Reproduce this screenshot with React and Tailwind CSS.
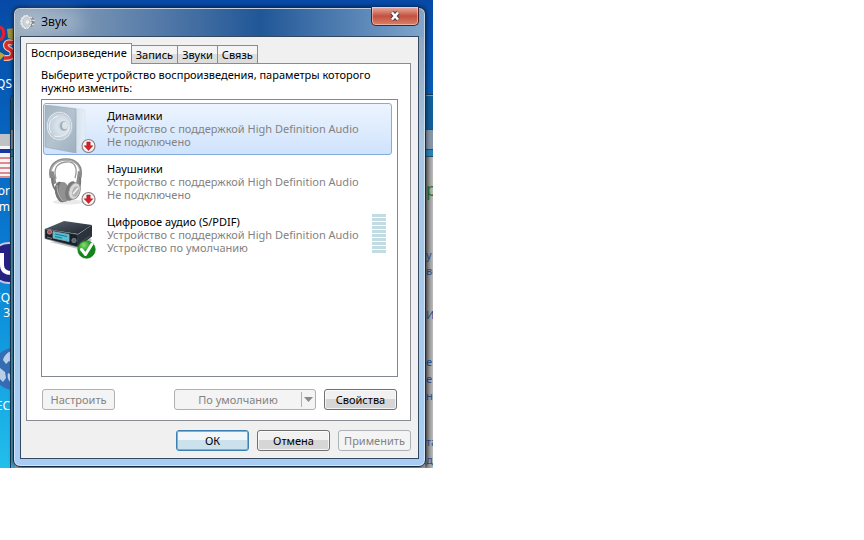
import React, { useState } from 'react';
import clsx from 'clsx';

const TABS = ['Воспроизведение', 'Запись', 'Звуки', 'Связь'];

const DEVICES = [
  { id: 'speakers', name: 'Динамики', status: 'Не подключено' },
  { id: 'headphones', name: 'Наушники', status: 'Не подключено' },
  { id: 'spdif', name: 'Цифровое аудио (S/PDIF)', status: 'Устройство по умолчанию', level: true },
];

const UnpluggedBadge = () => (
  <g>
    <circle cx="44.500" cy="41" r="6.500" fill="#f6f4f4" stroke="#8d8484" strokeWidth="1.200" />
    <path d="M42.800 37h3.400v3.800h2.600l-4.300 4.700-4.300-4.700h2.600z" fill="#d3222a" stroke="#a50f18" strokeWidth=".5" />
  </g>
);

const SpeakerIcon = () => (
  <svg className="h-12 w-14" viewBox="0 0 56 48" aria-hidden="true">
    <defs>
      <linearGradient id="spkFront" x1="0" y1="0" x2="1" y2="1">
        <stop offset="0" stopColor="#a3b2bf" />
        <stop offset=".5" stopColor="#b4c3cf" />
        <stop offset="1" stopColor="#9db0bf" />
      </linearGradient>
      <linearGradient id="spkSide" x1="0" x2="1">
        <stop offset="0" stopColor="#d5e1ed" />
        <stop offset="1" stopColor="#e6effa" />
      </linearGradient>
      <radialGradient id="spkCone" cx=".62" cy=".5">
        <stop offset="0" stopColor="#b5c3ce" />
        <stop offset=".45" stopColor="#dbe4eb" />
        <stop offset="1" stopColor="#c6d2dc" />
      </radialGradient>
    </defs>
    <path d="M1 0l7-.5L41 4l-9 0z" fill="#dde6ee" />
    <path d="M32 4l9 1v35l-9 8z" fill="url(#spkSide)" stroke="#d0dceb" strokeWidth=".5" />
    <path d="M1 0l31 4v44L1 42z" fill="url(#spkFront)" stroke="#93a5b4" strokeWidth=".6" />
    <ellipse cx="15.500" cy="21" rx="13" ry="14.500" fill="#eef3f8" stroke="#a2b2bf" strokeWidth=".6" />
    <ellipse cx="15.500" cy="21" rx="11.500" ry="13" fill="url(#spkCone)" stroke="#a8b7c4" strokeWidth=".6" />
    <path d="M7 28c-4-7-1-15 7-17M10 31c9 2 15-3 15-9" fill="none" stroke="#eef3f7" strokeWidth="1" />
    <ellipse cx="20" cy="21" rx="4" ry="4.800" fill="#9dadba" />
    <ellipse cx="21" cy="20.500" rx="3" ry="3.800" fill="#dbe4ea" />
    <UnpluggedBadge />
  </svg>
);

const HeadphonesIcon = () => (
  <svg className="h-12 w-14" viewBox="0 0 56 48" aria-hidden="true">
    <ellipse cx="24" cy="44" rx="15" ry="2.500" fill="#e9e9e9" />
    <path d="M7 20C4 8 12 1.500 22 1.500S39 8 36 20" fill="none" stroke="#898989" strokeWidth="2.600" />
    <path d="M7.500 18C5 8 13 2 22 2s15 5 13.500 16" fill="none" stroke="#c4c4c4" strokeWidth=".8" />
    <path d="M12 21C9 10 13 5 22 4s12 6 9 16" fill="none" stroke="#999" strokeWidth="1.300" />
    <path d="M5.500 14l4-1 3 12-4 2zM34 13l4 1-2 13-4-1z" fill="#8b8b8b" />
    <path d="M8 20c0 7 3 12 6 14M36 19c1 6 0 10-2 15" fill="none" stroke="#777" strokeWidth="1.800" />
    <ellipse cx="17" cy="34" rx="6" ry="10.500" fill="#747474" transform="rotate(-12 17 34)" />
    <ellipse cx="20" cy="34" rx="5.500" ry="10" fill="#929292" transform="rotate(-8 20 34)" />
    <path d="M13 27c0 7 2 12 6 16" fill="none" stroke="#b9b9b9" />
    <ellipse cx="27" cy="33" rx="5.500" ry="10" fill="#7b7b7b" transform="rotate(14 27 33)" />
    <ellipse cx="30.500" cy="33" rx="5.500" ry="8.500" fill="#dadada" stroke="#8f8f8f" transform="rotate(18 30.500 33)" />
    <ellipse cx="31.500" cy="33.500" rx="3.200" ry="5.500" fill="#b3b3b3" transform="rotate(18 31.500 33.500)" />
    <path d="M29 36l5-6" stroke="#f3f3f3" strokeWidth="1.500" />
    <UnpluggedBadge />
  </svg>
);

const ReceiverIcon = () => (
  <svg className="h-12 w-14" viewBox="0 0 56 48" aria-hidden="true">
    <defs>
      <linearGradient id="rcvTop" x1="0" y1="0" x2="1" y2="1">
        <stop offset="0" stopColor="#596470" />
        <stop offset="1" stopColor="#1d232b" />
      </linearGradient>
      <radialGradient id="okFill" cx=".35" cy=".25">
        <stop offset="0" stopColor="#8add74" />
        <stop offset=".6" stopColor="#2faa2b" />
        <stop offset="1" stopColor="#138418" />
      </radialGradient>
    </defs>
    <path d="M6 31l28 7 14-9-3-3z" fill="#c4c4c4" />
    <path d="M1 18L20 10l28 4-14 9z" fill="url(#rcvTop)" />
    <path d="M1 18l33 5.500v12.500L1 27.500z" fill="#182029" stroke="#5b6876" strokeWidth=".7" />
    <path d="M34 23.500L48 14v11.500l-14 10.500z" fill="#2a323c" />
    <path d="M36 32l10-7" stroke="#596572" strokeWidth=".7" />
    <path d="M9 20.500l16 3v7l-16-3.500z" fill="#50c2d3" stroke="#93a9b4" strokeWidth=".8" />
    <path d="M11 23l12 2.500M11 25.500l7 1.500" stroke="#1d7791" strokeWidth="1" />
    <circle cx="5.500" cy="21" r="2.200" fill="#b94a50" stroke="#9ba6af" strokeWidth=".8" />
    <circle cx="30" cy="29.500" r="2.200" fill="#59656f" stroke="#8a96a0" strokeWidth=".6" />
    <path d="M3 26l5 1.500" stroke="#8a96a0" strokeWidth=".8" />
    <circle cx="42.500" cy="38.500" r="8.800" fill="url(#okFill)" stroke="#137a18" strokeWidth=".6" />
    <path d="M37.500 38.500l4 5 6.500-10.500" fill="none" stroke="#fff" strokeWidth="3" strokeLinecap="round" strokeLinejoin="round" />
  </svg>
);

const ICONS = {
  speakers: SpeakerIcon,
  headphones: HeadphonesIcon,
  spdif: ReceiverIcon,
};

const LevelMeter = () => (
  <div className="mr-1 mb-1 flex flex-col gap-px" aria-hidden="true">
    {Array.from({ length: 10 }, (_, i) => (
      <span key={i} className="h-[3px] w-3.5 bg-[#c3dbe2]" />
    ))}
  </div>
);

const DeviceRow = ({ device, selected, onSelect }) => {
  const Icon = ICONS[device.id];
  return (
    <li>
      <button
        onClick={() => onSelect(device.id)}
        aria-pressed={selected}
        className={clsx(
          'flex w-full items-center rounded-[3px] border py-px pr-px text-left',
          selected
            ? 'border-[#84acdd] bg-linear-to-b from-[#edf4fe] to-[#cfe3fd]'
            : 'border-transparent'
        )}
      >
        <Icon />
        <span className="mb-0.5 ml-[7px] flex-1 whitespace-nowrap text-[#838383]">
          <span className="block text-black">{device.name}</span>
          <span className="block">Устройство с поддержкой High Definition Audio</span>
          <span className="block">{device.status}</span>
        </span>
        {device.level && <LevelMeter />}
      </button>
    </li>
  );
};

const DialogButton = ({ children, primary, disabled }) => (
  <button
    disabled={disabled}
    className={clsx(
      'h-[21px] w-[73px] rounded-[3px] border text-center',
      disabled && 'border-[#adb2b5] bg-[#f4f4f4] text-[#838383]',
      primary &&
        'border-[#3c7fb1] bg-linear-to-b from-[#f0f6f9] from-50% to-[#cbe2ec] to-50% text-black inset-ring inset-ring-[#46c8ee]',
      !disabled && !primary &&
        'border-[#707070] bg-linear-to-b from-[#f1f1f1] from-50% to-[#d6d6d6] to-50% text-black inset-ring inset-ring-white/70'
    )}
  >
    {children}
  </button>
);

const SoundIcon = () => (
  <svg className="size-4" viewBox="0 0 16 16" aria-hidden="true">
    <path d="M8 2.500l5 1 2 4.500-2.500 4.500-4.500 1z" fill="#7f888f" />
    <path d="M10 3l2 1M12 6l3 1M12 11l2-1" stroke="#e9ebec" strokeWidth="1.300" />
    <ellipse cx="6" cy="8" rx="5.200" ry="6.500" fill="#dfe2e4" stroke="#f4f5f6" strokeDasharray="2 1" />
    <ellipse cx="6.500" cy="8" rx="3.500" ry="4.800" fill="#cfd3d6" stroke="#b3b9bd" strokeWidth=".6" />
    <circle cx="7.500" cy="8" r="1.800" fill="#eef0f1" />
  </svg>
);

const CloseButton = () => (
  <button
    aria-label="Закрыть"
    className="-mt-px flex h-[19px] w-12 items-center justify-center rounded-b-[5px] border border-t-0 border-[#4b2029] bg-linear-to-b from-[#e3a79b] from-5% via-[#c4503f] via-50% to-[#d9806b] inset-ring inset-ring-white/40"
  >
    <svg className="h-3 w-3.5" viewBox="0 0 14 12" aria-hidden="true">
      <path d="M4 2.500l6 7M10 2.500l-6 7" stroke="#4a3a45" strokeWidth="4.600" />
      <path d="M4 2.500l6 7M10 2.500l-6 7" stroke="#fff" strokeWidth="2.600" />
    </svg>
  </button>
);

// Shortcuts that peek out on the left of the dialog
const Shortcuts = () => (
  <div className="absolute inset-y-0 left-0 w-3.5 overflow-hidden text-[12px] leading-4 text-white">
    <svg className="absolute top-6 left-0 h-10 w-3.5" viewBox="0 0 14 40" aria-hidden="true">
      <path d="M0 3c5 2 5 10 0 13" fill="none" stroke="#e8202c" strokeWidth="3" />
      <path d="M14 4l-7 1 1 9 6 2" fill="#a3983f" />
      <path d="M13 19c-8-3-9 4-4 6s6 10-5 9" fill="none" stroke="#ecc39e" strokeWidth="6" />
      <path d="M13 19c-8-3-9 4-4 6s6 10-5 9" fill="none" stroke="#db2930" strokeWidth="3.500" />
      <path d="M0 28l5 3-5 5" fill="#b4a83d" />
    </svg>
    <span className="absolute top-[76px] right-0.5">TQS</span>
    <svg className="absolute top-[134px] left-0 h-11 w-2.5" viewBox="0 0 10 44" aria-hidden="true">
      <path d="M0 0h10v44H0z" fill="#f6f4f4" />
      <path d="M0 0h10v12H0z" fill="#bfc3c7" />
      <path d="M0 15h10v4H0z" fill="#1737a7" />
      <path d="M0 24h10M0 29h10M0 34h10M0 39h10M0 43h10" stroke="#c6232c" />
    </svg>
    <span className="absolute top-[183px] right-1">Tor</span>
    <span className="absolute top-[199px] right-1">m</span>
    <svg className="absolute top-[241px] left-0 h-11 w-3" viewBox="0 0 12 44" aria-hidden="true">
      <circle cx="9" cy="22" r="20" fill="#262083" stroke="#c6c8e6" strokeWidth="2" />
      <path d="M2 12v12c0 6 4 8 10 8" fill="none" stroke="#fff" strokeWidth="4" />
    </svg>
    <span className="absolute top-[290px] right-1">EQ</span>
    <span className="absolute top-[305px] right-1">3</span>
    <svg className="absolute top-[346px] left-0 h-12 w-3" viewBox="0 0 12 48" aria-hidden="true">
      <circle cx="14" cy="23" r="21" fill="#356cb4" />
      <path d="M12 5c-5 1-8 5-9 9l3 4 3-3 3 2zM0 22l5 4 1 6-3 4-3-3zM8 27l4 2v8c-4-2-5-6-4-10z" fill="#b7cfe8" />
    </svg>
    <span className="absolute top-[398px] right-1">EC</span>
  </div>
);

// The window behind the dialog, only its edges are visible
const BACK_TEXT = [
  { text: 'у', top: 'top-[248px]' },
  { text: 'ве', top: 'top-[264px]' },
  { text: 'Из', top: 'top-[308px]' },
  { text: 'е', top: 'top-[355px]' },
  { text: 'е и', top: 'top-[372px]' },
  { text: 'ни', top: 'top-[389px]' },
  { text: 'та', top: 'top-[435px]' },
  { text: 'д', top: 'top-[453px]' },
];

const BackWindow = () => (
  <div className="absolute top-[94px] right-0 bottom-0 left-2.5 flex flex-col overflow-hidden rounded-tl-md border-t border-l border-[#16384f] bg-[#4c9dca]">
    <div className="h-[34px] border-t border-[#6f9fc4] bg-[#125d9c]" />
    <div className="h-[21px] border-y border-[#28506e] bg-[#8795a8]" />
    <div className="h-[7px] border-b border-[#1d506e] bg-[#2682b4]" />
    <div className="ml-1 flex-1 bg-[#aaa]" />
    <div className="absolute top-[62px] right-0 bottom-0 w-2 bg-linear-to-r from-[#6e6e6e] to-[#bcbcbc]" />
  </div>
);

const TitleBar = () => (
  <div className="flex h-7 items-center">
    <SoundIcon />
    <h1 className="mb-0.5 ml-[5px] flex-1 font-['Open_Sans','Noto_Sans',sans-serif] text-[12px] text-black">Звук</h1>
    <div className="self-start">
      <CloseButton />
    </div>
  </div>
);

const SoundDialog = () => {
  const [tab, setTab] = useState(TABS[0]);
  const [selected, setSelected] = useState('speakers');

  return (
    <section className="relative mt-[7px] mr-[7px] mb-px ml-[13px] rounded-[7px] border border-[#172b44] bg-linear-to-b from-[#879fba] via-[#a9c6e1] via-30% to-[#a8cdf4] px-1.5 pb-[7px] shadow-[0_0_4px_rgba(0,0,0,0.7)] inset-ring inset-ring-white/50">
      <div className="absolute inset-x-px top-px h-7 rounded-t-md bg-linear-to-r from-[#9aabbd] via-[#1f5797] via-60% to-[#7fa5cb]" />
      <div className="absolute top-1 left-1 h-5 w-16 rounded-full bg-white/25 blur-sm" />
      <div className="relative">
        <TitleBar />
        <div className="border border-[#34495f] bg-[#f0f0f0] px-[5px] pt-1.5 pb-[7px]">
          <div role="tablist" className="flex items-end">
            {TABS.map((name) => (
              <button
                key={name}
                role="tab"
                aria-selected={tab === name}
                onClick={() => setTab(name)}
                className={clsx(
                  'border border-b-0 border-[#898c95] px-1 text-black',
                  tab === name
                    ? 'relative -mb-px h-[21px] bg-white pb-1'
                    : '-ml-px h-[18px] bg-linear-to-b from-[#f4f4f4] from-50% to-[#dddddd] to-50%'
                )}
              >
                {name}
              </button>
            ))}
          </div>

          <div role="tabpanel" className="mr-0.5 border border-[#898c95] bg-white pt-1 pr-3 pb-2.5 pl-3.5">
            <p className="w-[350px] max-w-full text-black">
              Выберите устройство воспроизведения, параметры которого нужно изменить:
            </p>
            <ul className="mt-[5px] flex h-[278px] flex-col gap-px border border-[#828790] pt-[3px] pr-[5px] pl-px">
              {DEVICES.map((device) => (
                <DeviceRow
                  key={device.id}
                  device={device}
                  selected={selected === device.id}
                  onSelect={setSelected}
                />
              ))}
            </ul>

            {/* Device buttons */}
            <div className="mx-px mt-3 flex gap-2">
              <DialogButton disabled>Настроить</DialogButton>
              <div className="ml-auto flex h-[21px] w-[142px] rounded-[3px] border border-[#adb2b5] bg-[#f4f4f4] text-[#838383]">
                <button disabled className="flex-1">По умолчанию</button>
                <button disabled aria-label="Выбрать роль" className="my-0.5 flex w-3.5 items-center justify-center border-l border-[#adb2b5]">
                  <svg className="h-[5px] w-[9px]" viewBox="0 0 9 5" aria-hidden="true">
                    <path d="M0 0h9L4.500 5z" fill="#8a8a8a" />
                  </svg>
                </button>
              </div>
              <DialogButton>Свойства</DialogButton>
            </div>
          </div>

          {/* Dialog buttons */}
          <div className="mt-[9px] mr-0.5 flex justify-end gap-2">
            <DialogButton primary>ОК</DialogButton>
            <DialogButton>Отмена</DialogButton>
            <DialogButton disabled>Применить</DialogButton>
          </div>
        </div>
      </div>
    </section>
  );
};

const App = () => {
  return (
    <div className="min-h-screen bg-white font-['Noto_Sans','Open_Sans',sans-serif] text-[11px] leading-[13px]">
      <main className="relative flow-root w-1/2 min-w-[433px] overflow-hidden bg-linear-to-b from-[#0749a6] via-[#0a78d0] via-50% to-[#22bfec]">
        <Shortcuts />
        <BackWindow />
        <div className="absolute inset-y-0 right-0 w-[7px] overflow-hidden text-[11px] text-[#244f91]" aria-hidden="true">
          <span className="absolute top-[179px] left-0 text-[18px] leading-5 text-[#24712b]">р</span>
          {BACK_TEXT.map(({ text, top }) => (
            <span key={top} className={clsx('absolute left-0 whitespace-nowrap', top)}>{text}</span>
          ))}
        </div>
        <SoundDialog />
      </main>
    </div>
  );
};

export default App;
